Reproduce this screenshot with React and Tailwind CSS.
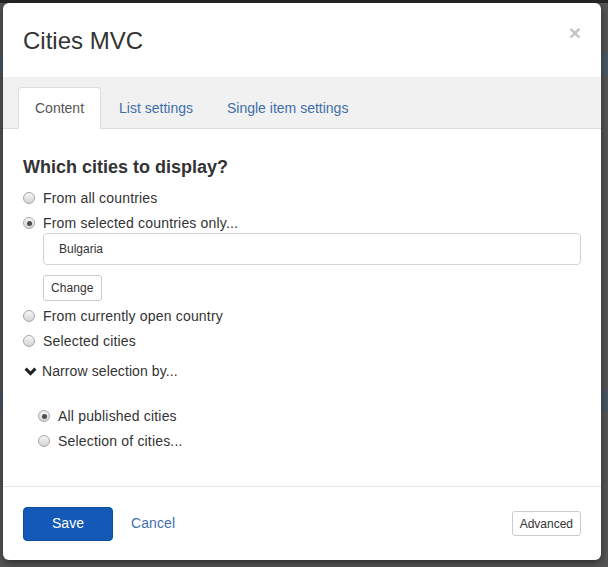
import React from 'react';

const Radio = ({ checked }) => (
    <span className="w-[12px] h-[12px] rounded-full border border-[#a8a8a8] bg-linear-to-b from-[#f6f6f6] to-[#d4d4d4] flex items-center justify-center shrink-0">
        {checked && <span className="w-[5px] h-[5px] rounded-full bg-[#4d4d4d]" />}
    </span>
);

const RadioRow = ({ label, checked, className = '' }) => (
    <label className={`flex items-center gap-[8px] h-[20px] text-[14px] tracking-[0.18px] text-[#333] ${className}`}>
        <Radio checked={checked} />
        <span>{label}</span>
    </label>
);

export default function App() {
    return (
        <div className="relative w-[608px] h-[567px] bg-[#565656] overflow-hidden font-['Liberation_Sans',Arial,sans-serif]">
            {/* Page behind the backdrop */}
            <div className="flex flex-col">
                <div className="h-[3px] bg-[#262626]" />
                <div className="h-[50px]" />
                <div className="h-[22px] bg-[#4d5867]" />
                <div className="h-[315px]" />
                <div className="h-[22px] bg-[#4b5664]" />
            </div>

            {/* Modal */}
            <div className="absolute left-[3px] top-[3px] w-[598px] h-[557px] bg-white rounded-[6px] shadow-[0_3px_9px_rgba(0,0,0,0.5)] flex flex-col overflow-hidden">
                {/* Header */}
                <div className="relative h-[74px] shrink-0 pl-[20px] pt-[25px]">
                    <h4 className="text-[24px] leading-[26px] text-[#333]">Cities MVC</h4>
                    <button className="absolute right-[20px] top-[19px] text-[21px] leading-[21px] font-bold text-[#c4c4c4]">
                        ×
                    </button>
                </div>

                {/* Tabs */}
                <div className="h-[52px] shrink-0 bg-[#f1f1f1] border-b border-[#dddddd] pt-[10px] pl-[15px] flex">
                    <div className="h-[42px] px-[16px] mr-[2px] bg-white border border-[#dddddd] border-b-white rounded-t-[4px] flex items-center text-[14px] text-[#555]">
                        Content
                    </div>
                    <div className="h-[42px] px-[16px] mr-[2px] flex items-center text-[14px] text-[#3f6fa8]">
                        List settings
                    </div>
                    <div className="h-[42px] px-[16px] flex items-center text-[14px] text-[#3f6fa8]">
                        Single item settings
                    </div>
                </div>

                {/* Body */}
                <div className="flex-1 px-[20px] pt-[28px] flex flex-col">
                    <h4 className="text-[18px] leading-[20px] font-bold text-[#333] mb-[11px]">
                        Which cities to display?
                    </h4>
                    <RadioRow label="From all countries" />
                    <RadioRow label="From selected countries only..." checked className="mt-[5px]" />
                    <div className="ml-[20px] h-[32px] border border-[#d4d4d4] rounded-[4px] flex items-center pl-[15px] text-[12px] text-[#333]">
                        Bulgaria
                    </div>
                    <div className="ml-[20px] mt-[10px] flex">
                        <button className="h-[26px] px-[7px] border border-[#cccccc] rounded-[3px] bg-white text-[12px] tracking-[0.1px] text-[#333]">
                            Change
                        </button>
                    </div>
                    <RadioRow label="From currently open country" className="mt-[5px]" />
                    <RadioRow label="Selected cities" className="mt-[5px]" />
                    <div className="mt-[10px] h-[20px] flex items-center gap-[5px] text-[14px] tracking-[0.1px] text-[#333]">
                        <svg width="13" height="9" viewBox="0 0 13 9" className="ml-[1px] shrink-0">
                            <polyline points="1.6 1.6 6.5 6.6 11.4 1.6" fill="none" stroke="#222" strokeWidth="3" />
                        </svg>
                        <span>Narrow selection by...</span>
                    </div>
                    <RadioRow label="All published cities" checked className="mt-[25px] ml-[15px]" />
                    <RadioRow label="Selection of cities..." className="mt-[5px] ml-[15px]" />
                </div>

                {/* Footer */}
                <div className="h-[74px] shrink-0 border-t border-[#e5e5e5] px-[20px] flex items-center">
                    <button className="w-[90px] h-[34px] rounded-[4px] bg-[#1459b8] border border-[#0f4f9f] text-white text-[14px]">
                        Save
                    </button>
                    <a href="#" className="ml-[18px] text-[14px] tracking-[0.1px] text-[#3f6fa8]">
                        Cancel
                    </a>
                    <button className="ml-auto h-[25px] px-[7px] border border-[#cccccc] rounded-[3px] bg-white text-[12px] text-[#333]">
                        Advanced
                    </button>
                </div>
            </div>
        </div>
    );
}
